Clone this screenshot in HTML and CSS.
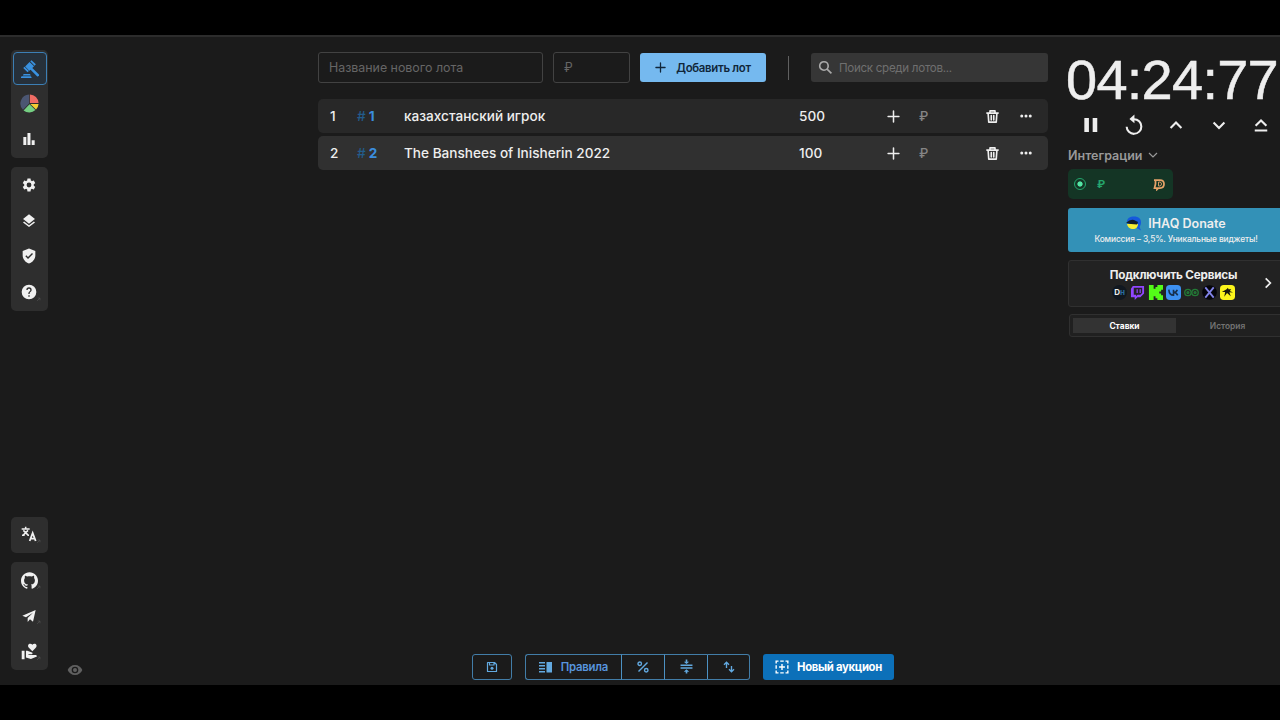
FILE: index.html
```html
<!DOCTYPE html>
<html lang="ru">
<head>
    <meta charset="UTF-8">
    <meta name="viewport" content="width=device-width, initial-scale=1.0">
    <title>Аукцион</title>
    <link rel="stylesheet" href="styles.css">
</head>
<body>

    <!-- Shared icons -->
    <svg class="icon-defs">
        <symbol id="plus" viewBox="0 0 24 24"><path d="M12 2v20M2 12h20" fill="none" stroke="currentColor" stroke-width="2.8" stroke-linecap="round"/></symbol>
        <symbol id="trash" viewBox="0 0 24 24"><path d="M3 6.500h18M8 6V3h8v3M5 7l1 14h12l1-14M10 10.500v7M14 10.500v7" fill="none" stroke="currentColor" stroke-width="2.600" stroke-linejoin="round" stroke-linecap="round"/></symbol>
        <symbol id="dots" viewBox="0 0 24 24"><circle cx="3.500" cy="12" r="3"/><circle cx="12" cy="12" r="3"/><circle cx="20.500" cy="12" r="3"/></symbol>
        <symbol id="ext" viewBox="0 0 24 24"><path d="M5 19L19 5M8 5h11v11" fill="none" stroke="currentColor" stroke-width="3"/></symbol>
    </svg>

    <div class="app">
        <nav class="sidebar">
            <div class="nav-group">
                <a class="nav-item active"><svg class="gavel" viewBox="0 0 24 24"><path d="M0 24v-1.300l1-1h12l1 1V24zM2.500 20.500l1-2h8.500l1 2zM12.300 1.800L14 .2l5.800 5.600-1.700 1.800zM3 10.700l1.700-1.600 5.800 5.600-1.800 1.700zM5.500 8.500l5.900-6 6 5.900-2.300 2.300 8.500 8.200a1.800 1.800 0 0 1-2.600 2.500l-8.300-8.500-1.700 1.400z"/></svg></a>
                <a class="nav-item"><svg class="wheel" viewBox="0 0 24 24"><path d="M11.500 12V.5A11.500 11.500 0 0 0 3.800 20z" fill="#4b5672"/><path d="M12.500 11.500V.5a11.500 11.500 0 0 1 11 11z" fill="#ef6c64"/><path d="M13 12.500h10.500a11 11 0 0 1-3.300 7z" fill="#f3cd32"/><path d="M12 13l7.500 7.200a11.500 11.500 0 0 1-15 .5z" fill="#75cf83"/></svg></a>
                <a class="nav-item"><svg viewBox="0 0 24 24"><path d="M3.500 9H8v12H3.500zM9.700 3h4.500v18H9.700zM16 14h4.500v7H16z"/></svg></a>
            </div>
            <div class="nav-group">
                <a class="nav-item"><svg viewBox="0 0 24 24"><path d="M19.140 12.940c.04-.3.060-.61.060-.94 0-.32-.02-.64-.07-.94l2.030-1.580c.18-.14.23-.41.120-.61l-1.920-3.320c-.12-.22-.37-.29-.59-.22l-2.390.96c-.5-.38-1.030-.7-1.620-.94l-.36-2.540c-.04-.24-.24-.41-.48-.41h-3.840c-.24 0-.43.17-.47.41l-.36 2.540c-.59.24-1.130.57-1.620.94l-2.390-.96c-.22-.08-.47 0-.59.22L2.740 8.870c-.12.21-.08.47.12.61l2.030 1.580c-.05.3-.09.63-.09.94s.02.64.07.94l-2.030 1.580c-.18.14-.23.41-.12.61l1.920 3.320c.12.22.37.29.59.22l2.390-.96c.5.38 1.030.7 1.620.94l.36 2.540c.05.24.24.41.48.41h3.840c.24 0 .44-.17.47-.41l.36-2.540c.59-.24 1.130-.56 1.620-.94l2.390.96c.22.080.47 0 .59-.22l1.920-3.320c.12-.22.070-.47-.12-.61zM12 15.600A3.600 3.600 0 1 1 12 8.400a3.600 3.600 0 0 1 0 7.200z"/></svg></a>
                <a class="nav-item"><svg viewBox="0 0 24 24"><path d="M11.990 18.540l-7.370-5.730L3 14.070l9 7 9-7-1.630-1.270zM12 16l7.360-5.730L21 9l-9-7-9 7 1.630 1.270z"/></svg></a>
                <a class="nav-item"><svg viewBox="0 0 24 24"><path d="M12 .8L2.500 4.500V11c0 5.600 4 10.800 9.500 12.200 5.500-1.400 9.500-6.600 9.500-12.200V4.500zM10.500 16.500l-4-4L8 11l2.500 2.500L16.500 7.600 18 9z"/></svg></a>
                <a class="nav-item"><svg viewBox="0 0 24 24"><path d="M12 1a11 11 0 1 0 0 22 11 11 0 0 0 0-22zm1 18h-2v-2h2zm2.070-7.750l-.9.920C13.450 12.900 13 13.500 13 15h-2v-.5c0-1.100.45-2.100 1.170-2.830l1.240-1.260c.37-.36.59-.86.59-1.410a2 2 0 0 0-4 0H8a4 4 0 0 1 8 0c0 .88-.36 1.680-.93 2.250z"/></svg><svg class="ext"><use href="#ext"/></svg></a>
            </div>
            <div class="nav-group nav-lang">
                <a class="nav-item"><svg viewBox="0 0 24 24"><path d="M1 4.500h12M7 1v3M3.500 6.500L11 14M10.500 6.500L3 14M1.500 14h4M9 14h3" fill="none" stroke="currentColor" stroke-width="2.300"/><path d="M13 22.500l4.500-12 4.500 12M14.500 19h6" fill="none" stroke="currentColor" stroke-width="2.700"/></svg><svg class="ext"><use href="#ext"/></svg></a>
            </div>
            <div class="nav-group">
                <a class="nav-item"><svg class="github" viewBox="0 0 24 24"><path d="M12 .297c-6.630 0-12 5.373-12 12 0 5.303 3.438 9.800 8.205 11.385.6.113.820-.258.820-.577 0-.285-.01-1.040-.015-2.040-3.338.724-4.042-1.610-4.042-1.610C4.422 18.070 3.633 17.700 3.633 17.700c-1.087-.744.084-.729.084-.729 1.205.084 1.838 1.236 1.838 1.236 1.070 1.835 2.809 1.305 3.495.998.108-.776.417-1.305.760-1.605-2.665-.3-5.466-1.332-5.466-5.930 0-1.310.465-2.380 1.235-3.220-.135-.303-.54-1.523.105-3.176 0 0 1.005-.322 3.300 1.230.96-.267 1.980-.399 3-.405 1.020.006 2.040.138 3 .405 2.280-1.552 3.285-1.230 3.285-1.230.645 1.653.240 2.873.120 3.176.765.840 1.230 1.910 1.230 3.220 0 4.610-2.805 5.625-5.475 5.920.420.360.810 1.096.810 2.220 0 1.606-.015 2.896-.015 3.286 0 .315.210.690.825.570C20.565 22.092 24 17.592 24 12.297c0-6.627-5.373-12-12-12"/></svg><svg class="ext"><use href="#ext"/></svg></a>
                <a class="nav-item"><svg viewBox="0 0 24 24"><path d="M22 3L2 11.500l5.500 2.300L18 7l-8 8v6l3.500-4 4.500 3.500z"/></svg><svg class="ext"><use href="#ext"/></svg></a>
                <a class="nav-item"><svg class="github" viewBox="0 0 24 24"><path d="M1 11h4v12H1zM16 11.500l-4.500-4.300C8.500 4 10.500 1 13 1c1.200 0 2.300.6 3 1.500C16.700 1.600 17.800 1 19 1c2.500 0 4.500 3 1.500 6.200zM7 11h2l6.500 2.300c.8.300 1 1.200.6 1.900-.3.500-.8.800-1.400.8H12l-1.500-.5-.3.900 1.800.6h8.500c1.200 0 2 1 2 2L14 22.500l-7-2z"/></svg><svg class="ext"><use href="#ext"/></svg></a>
            </div>
        </nav>

        <svg class="eye" viewBox="0 0 24 24"><path d="M12 4.500C7 4.500 2.700 7.600 1 12c1.700 4.400 6 7.500 11 7.500s9.300-3.100 11-7.500c-1.700-4.400-6-7.500-11-7.500zM12 17a5 5 0 1 1 0-10 5 5 0 0 1 0 10zm0-8a3 3 0 1 0 0 6 3 3 0 0 0 0-6z"/></svg>

        <main class="content">
            <div class="toolbar">
                <div class="field name-field">Название нового лота</div>
                <div class="field cost-field">₽</div>
                <button class="add-btn"><svg><use href="#plus"/></svg>Добавить лот</button>
                <span class="divider"></span>
                <div class="search"><svg viewBox="0 0 24 24"><circle cx="9.500" cy="9.500" r="6.800"/><path d="M14.500 14.500l7 7"/></svg>Поиск среди лотов...</div>
            </div>

            <div class="lots">
                <div class="lot">
                    <span class="place">1</span>
                    <span class="lot-id"><i>#</i>1</span>
                    <span class="lot-name">казахстанский игрок</span>
                    <span class="amount">500</span>
                    <svg class="lot-plus"><use href="#plus"/></svg>
                    <span class="rub">₽</span>
                    <svg class="lot-trash"><use href="#trash"/></svg>
                    <svg class="lot-dots"><use href="#dots"/></svg>
                </div>
                <div class="lot second">
                    <span class="place">2</span>
                    <span class="lot-id"><i>#</i>2</span>
                    <span class="lot-name">The Banshees of Inisherin 2022</span>
                    <span class="amount">100</span>
                    <svg class="lot-plus"><use href="#plus"/></svg>
                    <span class="rub">₽</span>
                    <svg class="lot-trash"><use href="#trash"/></svg>
                    <svg class="lot-dots"><use href="#dots"/></svg>
                </div>
            </div>

            <div class="actions">
                <button class="outline save"><svg viewBox="0 0 24 24"><path d="M3 3h14l4 4v14H3zM7 3v5h9V3" fill="none" stroke="currentColor" stroke-width="2.400" stroke-linejoin="round"/><circle cx="12" cy="14.500" r="3"/></svg></button>
                <div class="btn-group">
                    <button class="outline rules"><svg viewBox="0 0 26 24"><path d="M0 2h12v3H0zM0 8h12v3H0zM0 14h12v3H0zM0 20h12v3H0zM15 2h11v21H15z"/></svg>Правила</button>
                    <button class="outline"><svg viewBox="0 0 24 24"><path d="M3 21L21 3" fill="none" stroke="currentColor" stroke-width="2.800"/><circle cx="5.500" cy="5.500" r="3.500" fill="none" stroke="currentColor" stroke-width="2.800"/><circle cx="18.500" cy="18.500" r="3.500" fill="none" stroke="currentColor" stroke-width="2.800"/></svg></button>
                    <button class="outline"><svg class="compress" viewBox="0 0 24 26"><path d="M1 9.300h22v3H1zM1 14.200h22v3H1zM10.500 0h3v4H17l-5 4.500L7 4h3.500zM12 18l5 4.500h-3.500V26h-3v-3.500H7z"/></svg></button>
                    <button class="outline"><svg viewBox="0 0 24 24"><path d="M7 14V3M2 7.500L7 2.500l5 5M17 10v11M12 16.500l5 5 5-5" fill="none" stroke="currentColor" stroke-width="2.700"/></svg></button>
                </div>
                <button class="new-auction"><svg viewBox="0 0 24 24"><path d="M2 6V2h4M9 2h6M18 2h4v4M22 9v6M22 18v4h-4M15 22H9M6 22H2v-4M2 15V9M12 7v10M7 12h10" fill="none" stroke="currentColor" stroke-width="2.400"/></svg>Новый аукцион</button>
            </div>
        </main>

        <aside class="panel">
            <div class="timer">04:24:77</div>
            <div class="timer-controls">
                <svg viewBox="0 0 24 24"><path d="M4 3.500h5.500v17H4zM14 3.500h5.500v17H14z" fill="currentColor" stroke="none"/></svg>
                <svg class="replay" viewBox="0 0 24 24"><path d="M11 5h1a8.800 8.800 0 1 1-8.800 9"/><path d="M12.500-.5v10.500L6.500 4.800z" fill="currentColor" stroke="none"/></svg>
                <svg viewBox="0 0 24 24"><path d="M5.500 15.500L12 9l6.500 6.500"/></svg>
                <svg viewBox="0 0 24 24"><path d="M5.500 9l6.500 6.500L18.500 9"/></svg>
                <svg viewBox="0 0 24 24"><path d="M5.500 13L12 6.500l6.500 6.500M4.500 18.500h15"/></svg>
            </div>
            <div class="integrations">Интеграции<svg viewBox="0 0 12 12"><path d="M2 4l4 4 4-4"/></svg></div>
            <div class="integration-card">
                <span class="radio"></span>
                <span class="card-rub">₽</span>
                <svg viewBox="0 0 24 24"><path d="M2 3h12q8 0 8 8t-8 8h-3l-3 3v-3H3l2-8V3" stroke-width="3.500"/><path d="M11 7v8h3q3-1 3-4t-3-4z" stroke-width="1.800"/></svg>
            </div>
            <div class="donate">
                <div class="donate-title"><svg viewBox="0 0 16 15"><path d="M1 6C1 2 4 .5 8 .5c5 0 7 2.500 7 5.500 0 2-.5 3.500-1.500 5l1.500 3.500-5-3z" fill="#1559dc"/><path d="M1 8h11c0 3-2 5-5 5S1.500 11 1 8z" fill="#f5ee35"/><path d="M0 7q4-4 8-3l4 2-1 2.500-6-.5z" fill="#111d2c"/></svg>IHAQ Donate</div>
                <div class="donate-text">Комиссия – 3,5%. Уникальные виджеты!</div>
            </div>
            <div class="services">
                <div class="services-title">Подключить Сервисы</div>
                <div class="service-icons">
                    <span class="dh">D<b>H</b></span>
                    <svg viewBox="0 0 16 16"><path d="M3 1h12v8l-4 4H8l-3 3v-3H1V4z" fill="#9146ff"/><path d="M4 3h9v5.500l-2 2H8l-1.500 1.500v-1.500H4z" fill="#262028"/><path d="M7 4.500h1.300v4H7zM10.200 4.500h1.300v4h-1.300z" fill="#9146ff"/></svg>
                    <svg viewBox="0 0 16 16"><path d="M1 0h5v4h2V2h2V0h6v5h-2v2h-2v2h2v2h2v5h-6v-2H8v-2H6v4H1z" fill="#53fc18"/></svg>
                    <svg viewBox="0 0 16 16"><rect width="16" height="16" rx="4" fill="#3d91f2"/><path d="M3 5q.5 6 5 6V5M8 8q3 0 4-3M8 8q3 0 4.500 3" fill="none" stroke="#17304e" stroke-width="1.700"/></svg>
                    <svg viewBox="0 0 16 16"><g fill="none" stroke="#237b36" stroke-width="1.400"><circle cx="4.200" cy="8" r="3.400"/><circle cx="11.800" cy="8" r="3.400"/><circle cx="4.200" cy="8" r="1"/><circle cx="11.800" cy="8" r="1"/></g></svg>
                    <svg viewBox="0 0 16 16"><circle cx="8" cy="8" r="7.800" fill="#05050b"/><path d="M3.500 2.500l9 11M12.500 2.500l-9 11" stroke="#8183e6" stroke-width="2"/></svg>
                    <svg viewBox="0 0 16 16"><rect width="16" height="16" rx="4" fill="#fcf51b"/><path d="M2 7.500l5-3 1.500-1.500.5 1.500h3l-1.500 2 3.500 1.500-4-.3 1.500 4.300-4-3.500-3 4 1-5z" fill="#17180d"/></svg>
                </div>
                <svg class="chevron" viewBox="0 0 12 12"><path d="M4 2l4 4-4 4"/></svg>
            </div>
            <div class="tabs">
                <div class="tab selected">Ставки</div>
                <div class="tab">История</div>
            </div>
        </aside>
    </div>

</body>
</html>
```
FILE: styles.css
```css
* {
    box-sizing: border-box;
}

body {
    margin: 0;
    height: 720px;
    padding-top: 35px;
    overflow: hidden;
    background: #000;
    color: #eee;
    font-family: Inter, "Noto Sans", sans-serif;
}

svg {
    fill: currentColor;
    flex-shrink: 0;
}

.icon-defs {
    display: none;
}

.app {
    display: flex;
    height: 650px;
    width: 1280px;
    overflow: hidden;
    background: #1b1b1b;
    border-top: 2px solid #2c2c2c;
}

/* Sidebar */
.sidebar {
    width: 37px;
    margin: 13px 0 15px 11px;
    display: flex;
    flex-direction: column;
    gap: 9px;
    flex-shrink: 0;
}

.nav-group {
    background: #2e2e2e;
    border-radius: 5px;
    padding: 0 2px 1px 1px;
}

.nav-lang {
    margin-top: auto;
}

.nav-item {
    position: relative;
    height: 35.6px;
    display: flex;
    align-items: center;
    justify-content: center;
    color: #f0f0f0;
}

.nav-item svg {
    width: 16px;
    height: 16px;
}

.nav-item .gavel {
    width: 18px;
    height: 18px;
}

.nav-item .wheel {
    width: 19px;
    height: 19px;
}

.nav-item .github {
    width: 17px;
    height: 17px;
}

.nav-item.active {
    height: 33px;
    top: 2px;
    margin: 0 -1px 3px 1px;
    color: #3991df;
    background: #26303a;
    border: 1px solid #3c7fb5;
    border-radius: 4px;
}

.nav-item .ext {
    position: absolute;
    right: 5px;
    bottom: 8px;
    width: 5px;
    height: 5px;
    color: #555;
}

.eye {
    width: 16px;
    height: 16px;
    margin: auto 0 7px 19px;
    color: #606060;
}

/* Main column */
.content {
    width: 730px;
    margin: 15px 0 5px 235px;
    display: flex;
    flex-direction: column;
    flex-shrink: 0;
}

.toolbar {
    display: flex;
    align-items: center;
    height: 31px;
    font-size: 12.4px;
    color: #666;
}

.field {
    height: 31px;
    padding-left: 10px;
    line-height: 30px;
    border: 1px solid #424242;
    border-radius: 3px;
}

.name-field {
    width: 225px;
}

.cost-field {
    width: 77px;
    margin-left: 10px;
}

button {
    font-family: inherit;
    display: flex;
    align-items: center;
    justify-content: center;
    padding: 0;
}

.add-btn {
    width: 126px;
    height: 29px;
    margin-left: 10px;
    gap: 10px;
    border: none;
    border-radius: 3px;
    background: #75b9ef;
    color: #10263a;
    font-size: 11.4px;
    font-weight: 600;
    letter-spacing: -0.3px;
}

.add-btn svg {
    width: 11px;
    height: 11px;
}

.divider {
    width: 1px;
    height: 24px;
    margin: 0 22px;
    background: #606060;
}

.search {
    flex: 1;
    height: 29px;
    display: flex;
    align-items: center;
    gap: 6px;
    padding-left: 7px;
    border-radius: 3px;
    background: #363636;
    color: #6f6f6f;
    font-size: 11.6px;
    letter-spacing: -0.3px;
}

.search svg {
    width: 15px;
    height: 15px;
    fill: none;
    stroke: #aaa;
    stroke-width: 2.6;
}

.lots {
    margin-top: 16px;
}

.lot {
    display: grid;
    grid-template-columns: 27px 47px 395px 88px 32px 66px 35px 1fr;
    align-items: center;
    height: 34px;
    padding-left: 12px;
    border-radius: 5px;
    background: #282828;
    font-size: 13.6px;
    font-weight: 500;
}

.lot.second {
    margin-top: 3px;
    background: #303030;
}

.lot-id {
    color: #3b8ddd;
    font-weight: 700;
}

.lot-id i {
    color: #235c8b;
    font-style: normal;
    font-weight: 500;
    margin-right: 3px;
}

.rub {
    color: #858585;
    font-size: 13px;
}

.lot-plus {
    width: 13px;
    height: 13px;
}

.lot-trash {
    width: 15px;
    height: 15px;
}

.lot-dots {
    width: 12px;
    height: 12px;
}

/* Bottom buttons */
.actions {
    display: flex;
    margin: auto 0 0 154px;
}

.outline {
    width: 43px;
    height: 26px;
    padding-bottom: 1px;
    background: none;
    border: 1px solid #427da8;
    color: #62a9e0;
    font-size: 11.4px;
    font-weight: 600;
    letter-spacing: -0.25px;
}

.outline svg {
    width: 12px;
    height: 12px;
}

.save {
    width: 40px;
    margin-right: 13px;
    border-radius: 3px;
}

.btn-group {
    display: flex;
}

.btn-group .outline + .outline {
    border-left-color: #4c91c3;
}

.btn-group .outline:not(:last-child) {
    border-right: none;
}

.btn-group .outline:first-child {
    border-radius: 3px 0 0 3px;
}

.btn-group .outline:last-child {
    border-radius: 0 3px 3px 0;
}

.btn-group .rules {
    width: 96px;
    gap: 9px;
    color: #5795df;
}

.rules svg {
    width: 13px;
    color: #62a9e0;
}

.outline .compress {
    width: 13px;
    height: 15px;
}

.new-auction {
    width: 131px;
    height: 26px;
    padding-bottom: 1px;
    margin-left: 13px;
    gap: 8px;
    background: #0c70b9;
    color: #fff;
    border: none;
    border-radius: 3px;
    font-size: 11.3px;
    font-weight: 700;
    letter-spacing: -0.3px;
}

.new-auction svg {
    width: 14px;
    height: 14px;
}

/* Timer and integrations */
.panel {
    width: 216px;
    margin-left: 20px;
    flex-shrink: 0;
}

.timer {
    height: 63px;
    margin: 12px 0 0 -2px;
    line-height: 62px;
    font-family: "Liberation Sans", Arial, sans-serif;
    font-size: 56px;
    letter-spacing: -0.75px;
    white-space: nowrap;
    -webkit-text-stroke: 0.5px #eee;
}

.timer-controls {
    display: flex;
    justify-content: space-between;
    padding: 3px 13px 0;
}

.timer-controls svg {
    width: 20px;
    height: 20px;
    fill: none;
    stroke: currentColor;
    stroke-width: 2.5;
    overflow: visible;
}

.integrations {
    display: flex;
    align-items: center;
    gap: 4px;
    height: 20px;
    margin-top: 10px;
    color: #999;
    font-size: 12.5px;
    font-weight: 600;
}

.integrations svg {
    width: 12px;
    height: 12px;
    fill: none;
    stroke: currentColor;
    stroke-width: 1.2;
}

.integration-card {
    display: flex;
    align-items: center;
    width: 105px;
    height: 30px;
    margin-top: 4px;
    padding: 0 8px 0 6px;
    border-radius: 5px;
    background: #143525;
    color: #25a66d;
}

.radio {
    width: 12px;
    height: 12px;
    border: 1px solid #23a46c;
    border-radius: 50%;
    background: radial-gradient(#54e6a5 0 2.2px, transparent 3px);
}

.card-rub {
    margin-left: 11px;
    font-size: 11px;
    font-weight: 700;
}

.integration-card svg {
    width: 12px;
    height: 13px;
    margin-left: auto;
    fill: none;
    stroke: #e5a269;
}

.donate {
    height: 44px;
    margin-top: 9px;
    padding-top: 5px;
    border-radius: 3px;
    background: #3391b7;
    text-align: center;
}

.donate-title {
    display: flex;
    align-items: center;
    justify-content: center;
    gap: 6px;
    height: 20px;
    font-size: 12.5px;
    font-weight: 600;
}

.donate-title svg {
    width: 16px;
    height: 15px;
}

.donate-text {
    font-size: 8.4px;
    line-height: 12px;
    font-weight: 500;
    letter-spacing: -0.15px;
    white-space: nowrap;
}

.services {
    position: relative;
    height: 47px;
    margin-top: 8px;
    padding: 6px 5px 0 0;
    border: 1px solid #303030;
    border-radius: 3px;
    background: #222;
}

.services-title {
    height: 16px;
    line-height: 16px;
    font-size: 11.7px;
    font-weight: 700;
    letter-spacing: -0.2px;
    text-align: center;
    white-space: nowrap;
}

.service-icons {
    display: flex;
    justify-content: center;
    gap: 3px;
    margin-top: 2px;
}

.service-icons svg,
.dh {
    width: 15px;
    height: 15px;
}

.dh {
    border-radius: 50%;
    background: #111820;
    font-size: 8px;
    font-weight: 700;
    line-height: 15px;
    text-align: center;
}

.dh b {
    color: #286a9d;
    font-size: 6px;
}

.services .chevron {
    position: absolute;
    right: 8px;
    top: 15px;
    width: 14px;
    height: 14px;
    fill: none;
    stroke: #eee;
    stroke-width: 1.5;
}

.tabs {
    display: flex;
    height: 23px;
    margin: 7px 1px 0 1px;
    padding: 3px;
    border: 1px solid #303030;
    border-radius: 3px;
    background: #202020;
}

.tab {
    flex: 1;
    line-height: 16px;
    text-align: center;
    color: #737373;
    font-size: 8.4px;
    font-weight: 600;
}

.tab.selected {
    background: #333;
    color: #fff;
    font-weight: 700;
}
```
